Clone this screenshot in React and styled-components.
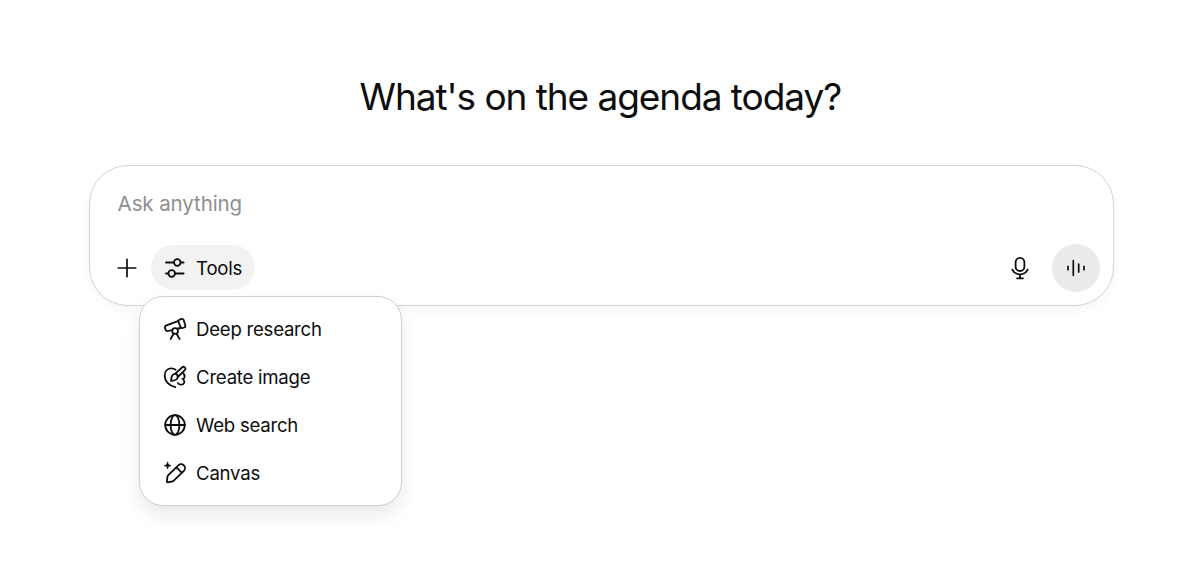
import React from "react";
import styled, { createGlobalStyle } from "styled-components";

const GlobalStyle = createGlobalStyle`
  * {
    box-sizing: border-box;
  }

  body {
    margin: 0;
    background: #fff;
    color: #0d0d0d;
    font-family: Inter, "Liberation Sans", sans-serif;
  }

  button {
    border: 0;
    padding: 0;
    background: none;
    color: inherit;
    font: inherit;
    cursor: pointer;
  }
`;

const Page = styled.main`
  display: flex;
  flex-direction: column;
  align-items: center;
  height: 587px;
  padding: 73px 86px 0 88.6px;
  overflow: hidden;
`;

const Title = styled.h1`
  margin: 0 0 44px;
  padding-right: 2px;
  font-size: 37px;
  font-weight: 400;
  line-height: 48px;
  letter-spacing: -1.05px;
  white-space: nowrap;
`;

const Composer = styled.section`
  display: flex;
  flex-direction: column;
  justify-content: space-between;
  width: 100%;
  height: 141px;
  padding: 22px 13px 13.5px 15px;
  border: 1px solid #d3d3d3;
  border-radius: 39px;
  background: #fff;
  box-shadow: 0 5px 8px rgba(0, 0, 0, 0.035);
`;

const Prompt = styled.div`
  padding-left: 13px;
  color: #8f8f8f;
  font-size: 20.5px;
  line-height: 31px;
  letter-spacing: -0.1px;
`;

const Toolbar = styled.div`
  display: flex;
  align-items: center;
  justify-content: space-between;
  height: 48px;
`;

const Group = styled.div`
  display: flex;
  align-items: center;
  gap: ${(props) => props.$gap || 0}px;
`;

const IconButton = styled.button`
  display: flex;
  align-items: center;
  justify-content: center;
  width: ${(props) => props.$size}px;
  height: ${(props) => props.$size}px;
  border-radius: 50%;
  background: ${(props) => (props.$filled ? "#ebebeb" : "transparent")};
`;

const ToolsWrap = styled.div`
  position: relative;
`;

const ToolsButton = styled.button`
  display: flex;
  align-items: center;
  gap: 9.5px;
  width: 104px;
  height: 45px;
  padding-left: 12px;
  border-radius: 23px;
  background: #f2f2f2;
`;

const Label = styled.span`
  font-size: 18.6px;
  line-height: 24px;
  letter-spacing: -0.25px;
  white-space: nowrap;
`;

const Menu = styled.ul`
  position: absolute;
  top: 50.5px;
  left: -11.5px;
  width: 263px;
  height: 210px;
  margin: 0;
  padding: 8px 0;
  border: 1px solid #cfcfcf;
  border-radius: 24px;
  background: #fff;
  box-shadow: 0 9px 18px rgba(0, 0, 0, 0.09);
  list-style: none;
`;

const MenuItem = styled.li`
  display: flex;
  align-items: center;
  gap: 9.5px;
  height: 48px;
  padding-left: 22.5px;
`;

const Icon = styled.svg`
  display: block;
  flex: none;
  width: 24px;
  height: 24px;
  fill: none;
  stroke: currentColor;
  stroke-width: ${(props) => props.$weight || 1.8};
  stroke-linecap: round;
  stroke-linejoin: round;
`;

const PlusIcon = () => (
  <Icon viewBox="0 0 24 24" $weight={1.7}>
    <path d="M12 3.3v17.4M3.3 12h17.4" />
  </Icon>
);

const SlidersIcon = () => (
  <Icon viewBox="0 0 24 24">
    <path d="M3 6.5h8M17.6 6.5h3M3 17.5h2.4M12 17.5h8.6" />
    <circle cx="14.3" cy="6.5" r="3.3" />
    <circle cx="8.7" cy="17.5" r="3.3" />
  </Icon>
);

const MicIcon = () => (
  <Icon viewBox="0 0 24 24">
    <rect x="7.6" y="1.8" width="8.8" height="13.2" rx="4.4" />
    <path d="M4.3 13.5c1.3 3 4.2 4.8 7.7 4.8s6.4-1.8 7.7-4.8M12 18.5v3.7M9 22.3h6" />
  </Icon>
);

const VoiceIcon = () => (
  <Icon viewBox="0 0 24 24" $weight={1.7}>
    <path d="M4 10.3v3.4M9.3 4.7v14.6M14.7 8v8M20 10.3v3.4" />
  </Icon>
);

const TelescopeIcon = () => (
  <Icon viewBox="0 0 24 24">
    <path d="M15 4.2 3.4 8.3a2.2 2.2 0 0 0-1.3 2.8l.5 1.5a2.2 2.2 0 0 0 2.6 1.4L9.2 13M15 11.5l2.3-.5" />
    <path d="m16.6 2.6 1.9-.7a1.7 1.7 0 0 1 2.2 1.1l1.6 5.4a1.7 1.7 0 0 1-1.1 2.1l-1.6.5a1.7 1.7 0 0 1-2.1-1.1L15.4 4.7a1.7 1.7 0 0 1 1.2-2.1Z" />
    <circle cx="12.1" cy="14" r="2.9" />
    <path d="m10.5 17-2.9 5M13.7 17l2.9 5" />
  </Icon>
);

const BrushIcon = () => (
  <Icon viewBox="0 0 24 24">
    <path d="M12.2 22.2C6.6 20.4 1.7 16.4 1.7 10.4 1.7 6.4 4.2 3.6 7.9 3.4c2-.1 3.4.4 4.7 1.4" />
    <path d="M8.1 15.9c.1-4.1.8-6.8 3.4-7.1 2-.2 3.4 1.1 3.2 3-.2 2.6-2.8 4-6.6 4.1Z" />
    <path d="M12.3 8.6 19 2.5a1.9 1.9 0 0 1 2.8 2.6L14.8 12" />
    <path d="M20.4 8.4c1.3 1.5 1.6 3.4.6 4.8-.4.5-.9.7-1.6.7 1.9.9 2.5 3.1 1.3 4.6-1.5 1.9-4.7 1.4-5.9-.6" />
  </Icon>
);

const GlobeIcon = () => (
  <Icon viewBox="0 0 24 24">
    <circle cx="12" cy="12" r="9.8" />
    <ellipse cx="12" cy="12" rx="4.4" ry="9.8" />
    <path d="M2.2 12h19.6" />
  </Icon>
);

const PencilIcon = () => (
  <Icon viewBox="0 0 24 24">
    <path d="m3.9 20.7.5-4.6c.1-.8.4-1.4.9-1.9L15.3 4.4a3.9 3.9 0 0 1 5.6 5.5L10.8 19.6c-.5.5-1.1.8-1.8.9l-4.4.8a.6.6 0 0 1-.7-.6ZM13.4 6.3l5.5 5.5" />
    <path
      d="M4.6 1.3c.5 2.2 1.1 2.8 3.4 3.3-2.3.5-2.9 1.1-3.4 3.3C4.1 5.7 3.5 5.1 1.2 4.6c2.3-.5 2.9-1.1 3.4-3.3Z"
      fill="currentColor"
      strokeWidth="0.8"
    />
  </Icon>
);

const tools = [
  { label: "Deep research", icon: TelescopeIcon },
  { label: "Create image", icon: BrushIcon },
  { label: "Web search", icon: GlobeIcon },
  { label: "Canvas", icon: PencilIcon },
];

const App = () => {
  return (
    <>
      <GlobalStyle />
      <Page>
        <Title>What's on the agenda today?</Title>
        <Composer>
          <Prompt>Ask anything</Prompt>
          <Toolbar>
            <Group $gap={2}>
              <IconButton $size={44} aria-label="Add">
                <PlusIcon />
              </IconButton>
              <ToolsWrap>
                <ToolsButton>
                  <SlidersIcon />
                  <Label>Tools</Label>
                </ToolsButton>
                <Menu>
                  {tools.map(({ label, icon: ToolIcon }) => (
                    <MenuItem key={label}>
                      <ToolIcon />
                      <Label>{label}</Label>
                    </MenuItem>
                  ))}
                </Menu>
              </ToolsWrap>
            </Group>
            <Group $gap={8}>
              <IconButton $size={48} aria-label="Dictate">
                <MicIcon />
              </IconButton>
              <IconButton $size={48} $filled aria-label="Voice mode">
                <VoiceIcon />
              </IconButton>
            </Group>
          </Toolbar>
        </Composer>
      </Page>
    </>
  );
};

export default App;
